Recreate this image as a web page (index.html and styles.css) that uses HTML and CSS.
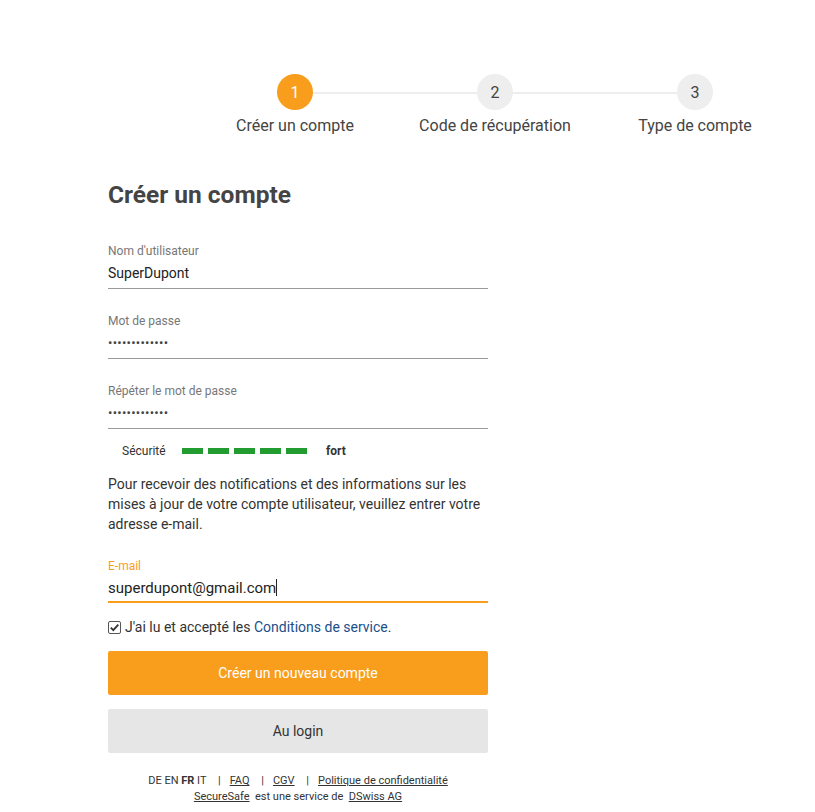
FILE: index.html
```html
<!DOCTYPE html>
<html lang="fr">
<head>
<meta charset="utf-8">
<title>Créer un compte</title>
<link rel="stylesheet" href="styles.css">
</head>
<body>
<div class="page">
  <ol class="stepper">
    <li class="step active"><span class="dot">1</span><span class="step-label">Créer un compte</span></li>
    <li class="step"><span class="dot">2</span><span class="step-label">Code de récupération</span></li>
    <li class="step last"><span class="dot">3</span><span class="step-label">Type de compte</span></li>
  </ol>

  <form class="form">
    <h1 class="title">Créer un compte</h1>

    <div class="field">
      <label class="field-label">Nom d'utilisateur</label>
      <div class="field-value">SuperDupont</div>
    </div>
    <div class="field">
      <label class="field-label">Mot de passe</label>
      <div class="field-value dots">•••••••••••••</div>
    </div>
    <div class="field">
      <label class="field-label">Répéter le mot de passe</label>
      <div class="field-value dots">•••••••••••••</div>
    </div>

    <div class="strength">
      <span class="strength-label">Sécurité</span>
      <span class="bars"><i></i><i></i><i></i><i></i><i></i></span>
      <span class="strength-value">fort</span>
    </div>

    <p class="info">Pour recevoir des notifications et des informations sur les mises à jour de votre compte utilisateur, veuillez entrer votre adresse e-mail.</p>

    <div class="field focused">
      <label class="field-label">E-mail</label>
      <div class="field-value">superdupont@gmail.com<span class="caret"></span></div>
    </div>

    <div class="terms">
      <span class="checkbox"><svg width="11" height="11" viewBox="0 0 11 11"><path d="M1.8 5.6 L4.3 8.1 L9.3 2.6" fill="none" stroke="#333" stroke-width="1.8"/></svg></span>
      <span>J'ai lu et accepté les <a class="link" href="#">Conditions de service</a>.</span>
    </div>

    <button type="button" class="btn primary">Créer un nouveau compte</button>
    <button type="button" class="btn secondary">Au login</button>

    <footer class="footer">
      <div class="footer-line">
        <span class="langs">DE EN <b>FR</b> IT</span>
        <span class="sep">|</span><a href="#">FAQ</a>
        <span class="sep">|</span><a href="#">CGV</a>
        <span class="sep">|</span><a href="#">Politique de confidentialité</a>
      </div>
      <div class="footer-line"><a href="#">SecureSafe</a>&nbsp; est une service de&nbsp; <a href="#">DSwiss AG</a></div>
    </footer>
  </form>
</div>
</body>
</html>
```
FILE: styles.css
```css
* { box-sizing: border-box; }
html, body { margin: 0; padding: 0; background: #fff; }
body { font-family: Roboto, "Liberation Sans", sans-serif; color: #333; }

.page { padding-top: 74px; }

.stepper {
  list-style: none;
  margin: 0 0 0 195px;
  padding: 0;
  display: flex;
  width: 600px;
}
.step {
  position: relative;
  width: 200px;
  display: flex;
  flex-direction: column;
  align-items: center;
}
.step::after {
  content: "";
  position: absolute;
  top: 18px;
  left: 100px;
  width: 200px;
  height: 2px;
  background: #eeeeee;
  z-index: 0;
}
.step.last::after { display: none; }
.dot {
  position: relative;
  z-index: 1;
  width: 36px;
  height: 36px;
  border-radius: 50%;
  background: #eeeeee;
  color: #444;
  font-size: 16px;
  display: flex;
  align-items: center;
  justify-content: center;
}
.step.active .dot { background: #f99d1c; color: #fff; }
.step-label {
  margin-top: 6px;
  font-size: 16px;
  line-height: 20px;
  color: #444;
  white-space: nowrap;
}

.form {
  width: 380px;
  margin: 44px 0 0 108px;
}
.title {
  margin: 0 0 34px;
  font-size: 24.5px;
  line-height: 30px;
  font-weight: 700;
  color: #444;
}

.field {
  border-bottom: 1px solid #9a9a9a;
  margin-bottom: 25px;
  height: 45px;
}
.field-label {
  display: block;
  font-size: 12px;
  line-height: 14px;
  color: #777;
}
.field-value {
  margin-top: 5px;
  font-size: 14px;
  line-height: 20px;
  color: #222;
}
.field-value.dots { font-size: 13px; letter-spacing: 0.25px; color: #444; }

.strength {
  display: flex;
  align-items: center;
  margin-top: -13px;
  padding-left: 14px;
  height: 20px;
  font-size: 12px;
  color: #333;
}
.strength-label { width: 60px; }
.bars { display: flex; gap: 5px; }
.bars i { display: block; width: 21px; height: 6px; background: #229c30; }
.strength-value { margin-left: 19px; font-weight: 700; }

.info {
  margin: 13px 0 0;
  font-size: 14px;
  line-height: 20px;
  color: #333;
}

.field.focused {
  margin-top: 25px;
  border-bottom: 2px solid #f99d1c;
  height: 44px;
  margin-bottom: 15px;
}
.field.focused .field-label { color: #f99d1c; }
.field.focused .field-value { font-size: 15px; margin-top: 5px; }
.caret {
  display: inline-block;
  width: 1px;
  height: 17px;
  background: #222;
  vertical-align: -3px;
}

.terms {
  display: flex;
  align-items: center;
  gap: 4px;
  font-size: 14px;
  line-height: 18px;
  color: #333;
}
.checkbox {
  width: 13px;
  height: 13px;
  border: 1px solid #555;
  border-radius: 2px;
  display: flex;
  align-items: center;
  justify-content: center;
}
.link { color: #1a4f8b; text-decoration: none; }

.btn {
  display: block;
  width: 380px;
  height: 44px;
  border: 0;
  border-radius: 2px;
  font-family: inherit;
  font-size: 14px;
  font-weight: 400;
  cursor: pointer;
}
.btn.primary { margin-top: 15px; background: #f99d1c; color: #fff; }
.btn.secondary { margin-top: 14px; background: #e6e6e6; color: #333; }

.footer {
  margin-top: 20px;
  text-align: center;
  font-size: 11px;
  line-height: 16px;
  color: #333;
}
.footer a { color: #333; text-decoration: underline; }
.sep { margin: 0 9px 0 9px; }
.langs b { font-weight: 700; }
```
